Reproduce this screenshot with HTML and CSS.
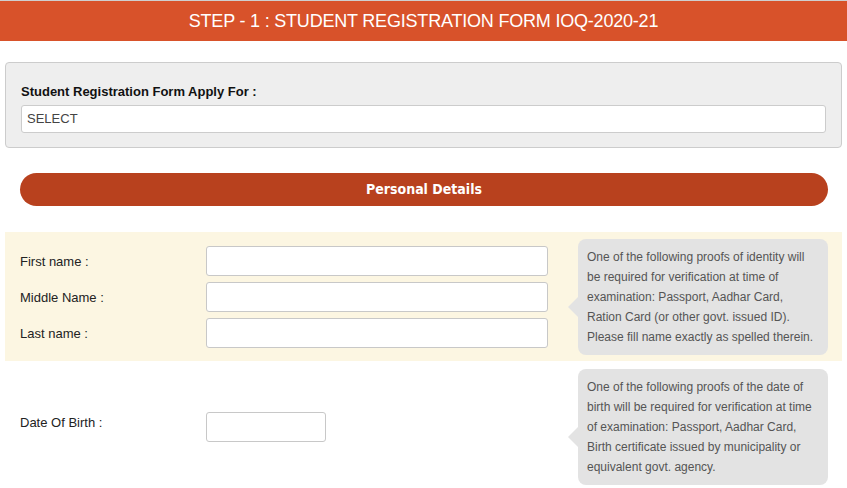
FILE: index.html
```html
<!DOCTYPE html>
<html lang="en">

<head>
    <meta charset="UTF-8">
    <meta name="viewport" content="width=device-width, initial-scale=1.0">
    <title>Student Registration</title>
    <link rel="stylesheet" href="styles.css">
</head>

<body>
    <div class="top-bar">STEP - 1 : STUDENT REGISTRATION FORM IOQ-2020-21</div>

    <div class="wrap">
        <div class="apply-box">
            <label class="apply-label">Student Registration Form Apply For :</label>
            <div class="select-box">SELECT</div>
        </div>

        <div class="section-title">Personal Details</div>

        <div class="row row-name">
            <div class="fields">
                <div class="field">
                    <label>First name :</label>
                    <input type="text">
                </div>
                <div class="field">
                    <label>Middle Name :</label>
                    <input type="text">
                </div>
                <div class="field">
                    <label>Last name :</label>
                    <input type="text">
                </div>
            </div>
            <div class="note">One of the following proofs of identity will be required for verification at time of examination: Passport, Aadhar Card, Ration Card (or other govt. issued ID). Please fill name exactly as spelled therein.</div>
        </div>

        <div class="row row-dob">
            <div class="fields">
                <div class="field">
                    <label>Date Of Birth :</label>
                    <input type="text" class="short">
                </div>
            </div>
            <div class="note">One of the following proofs of the date of birth will be required for verification at time of examination: Passport, Aadhar Card, Birth certificate issued by municipality or equivalent govt. agency.</div>
        </div>
    </div>
</body>

</html>
```

FILE: styles.css
```css
body {
    margin: 0;
    font-family: "Liberation Sans", Arial, sans-serif;
    font-size: 13px;
    color: #222;
    background: #fff;
}

.top-bar {
    border-top: 1px solid #cfcfcf;
    background-color: #d8522a;
    color: #fff;
    height: 40px;
    line-height: 40px;
    text-align: center;
    font-size: 18px;
    letter-spacing: -0.2px;
}

.wrap {
    padding: 0 5px;
}

.apply-box {
    margin-top: 21px;
    background-color: #eeeeee;
    border: 1px solid #cccccc;
    border-radius: 4px;
    padding: 21px 15px 14px;
}

.apply-label {
    display: block;
    font-weight: bold;
    color: #111;
    margin-bottom: 6px;
}

.select-box {
    background: #fff;
    border: 1px solid #cccccc;
    border-radius: 3px;
    height: 26px;
    line-height: 26px;
    padding-left: 5px;
    color: #444;
}

.section-title {
    margin: 25px 14px 0 15px;
    height: 33px;
    line-height: 33px;
    border-radius: 17px;
    background-color: #b8411e;
    color: #fff;
    text-align: center;
    font-weight: bold;
    font-family: "DejaVu Sans Condensed", "Liberation Sans", sans-serif;
    font-size: 14px;
}

.row {
    display: flex;
    gap: 30px;
    padding: 7px 0 6px 15px;
}

.row-name {
    margin-top: 26px;
    background-color: #fcf6e2;
}

.row-dob {
    padding-top: 8px;
    align-items: center;
}

.fields {
    width: 528px;
    display: flex;
    flex-direction: column;
    gap: 6px;
}

.row-name .fields {
    padding-top: 7px;
}

.field {
    display: flex;
    align-items: center;
}

.field label {
    width: 186px;
    flex-shrink: 0;
}

.row-dob .field label {
    margin-bottom: 10px;
}

.field input {
    box-sizing: border-box;
    width: 342px;
    height: 30px;
    border: 1px solid #c8c8c8;
    border-radius: 3px;
    margin: 0;
}

.field input.short {
    width: 120px;
}

.note {
    position: relative;
    box-sizing: border-box;
    width: 250px;
    background-color: #e3e3e3;
    border-radius: 8px;
    padding: 8px 8px 8px 9px;
    line-height: 20px;
    font-size: 12px;
    color: #555;
}

.note::before {
    content: "";
    position: absolute;
    left: -10px;
    top: 58px;
    border-top: 10px solid transparent;
    border-bottom: 10px solid transparent;
    border-right: 10px solid #e3e3e3;
}
```
